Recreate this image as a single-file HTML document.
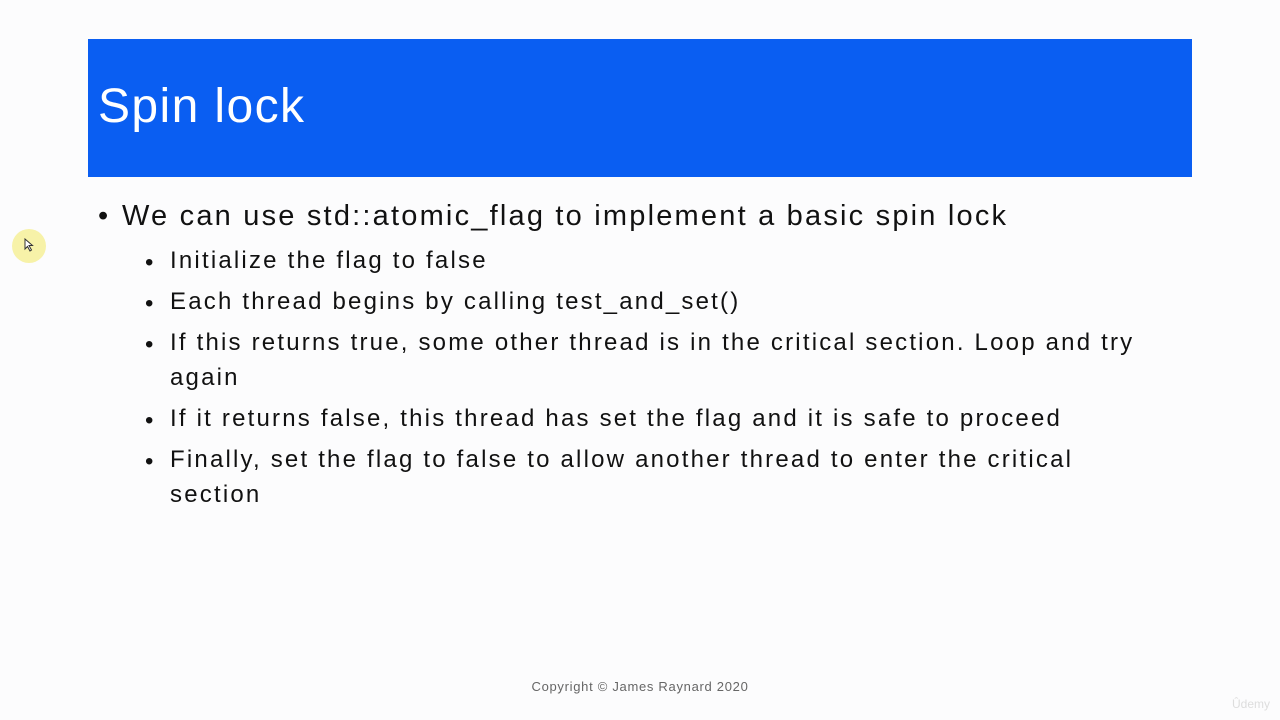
<!DOCTYPE html>
<html><head><meta charset="utf-8"><style>
body{margin:0;width:1280px;height:720px;background:#fcfcfd;font-family:"Liberation Sans",sans-serif;position:relative;overflow:hidden;color:#111}
.hdr{position:absolute;left:88px;top:39px;width:1104px;height:138px;background:#0a5ef2}
.hdr span{position:absolute;left:10px;top:40px;font-size:48px;color:#fff;letter-spacing:1.4px}
.l{position:absolute;white-space:nowrap}
.b1{left:122px;top:200px;font-size:29px;letter-spacing:2.2px}
.b2{left:170px;font-size:24px;letter-spacing:2.2px}
.d1{position:absolute;left:98px;top:200px;font-size:29px}
.d2{position:absolute;left:145px;font-size:24px;margin-top:2px}
.foot{position:absolute;left:0;width:1280px;top:679px;text-align:center;font-size:13px;color:#666;letter-spacing:0.7px}
</style></head><body>
<div class="hdr"><span>Spin lock</span></div>
<div style="position:absolute;left:12px;top:229px;width:34px;height:34px;border-radius:50%;background:#f7f2a8"></div>
<svg style="position:absolute;left:24px;top:238px" width="10" height="14"><path d="M1 1 L1 11 L3.5 8.5 L6 13 L7.5 12 L5 7.5 L8.5 7.5 Z" fill="#fff" stroke="#333" stroke-width="1"/></svg>
<div class="d1">•</div><div class="l b1">We can use std::atomic_flag to implement a basic spin lock</div>
<div class="d2" style="top:247px">•</div><div class="l b2" style="top:247px">Initialize the flag to false</div>
<div class="d2" style="top:288px">•</div><div class="l b2" style="top:288px">Each thread begins by calling test_and_set()</div>
<div class="d2" style="top:329px">•</div><div class="l b2" style="top:329px">If this returns true, some other thread is in the critical section. Loop and try</div>
<div class="l b2" style="top:364px">again</div>
<div class="d2" style="top:405px">•</div><div class="l b2" style="top:405px">If it returns false, this thread has set the flag and it is safe to proceed</div>
<div class="d2" style="top:446px">•</div><div class="l b2" style="top:446px">Finally, set the flag to false to allow another thread to enter the critical</div>
<div class="l b2" style="top:481px">section</div>
<div class="foot">Copyright © James Raynard 2020</div>
<div style="position:absolute;right:10px;top:697px;font-size:12px;color:#ddd">Ûdemy</div>
</body></html>
